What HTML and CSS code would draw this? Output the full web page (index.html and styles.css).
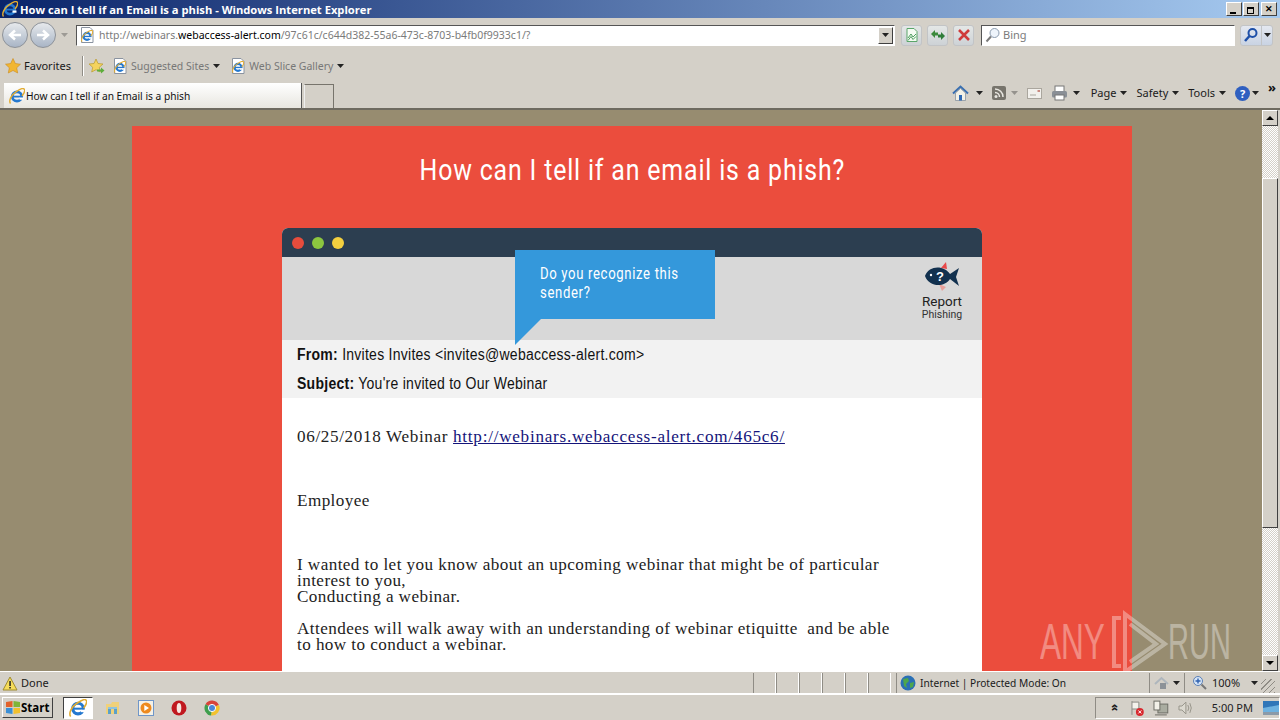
FILE: index.html
```html
<!DOCTYPE html>
<html lang="en">
<head>
    <meta charset="UTF-8">
    <title>How can I tell if an Email is a phish</title>
    <link rel="stylesheet" href="styles.css">
</head>
<body>
    <svg class="defs" width="0" height="0">
        <symbol id="ie" viewBox="0 0 16 16">
            <circle cx="8" cy="8.500" r="4.700" fill="none" stroke="#2478cf" stroke-width="2.800"/>
            <rect x="4" y="7.700" width="9" height="1.800" fill="#2478cf"/>
            <rect x="10.500" y="9.500" width="4" height="2.200" fill="#fff"/>
            <path d="M1.500 15.500C-.5 13 2 7 7 3.800S14.500-.5 15.500 1.500 14.500 6 13 8" fill="none" stroke="#e2ac32" stroke-width="1.400"/>
        </symbol>
        <symbol id="page" viewBox="0 0 16 16">
            <path d="M2.500 .5H11L14 3.500V15.500H2.500Z" fill="#fff" stroke="#8a93a0"/>
            <use href="#ie" x="2" y="3" width="12" height="12"/>
        </symbol>
        <symbol id="arrow" viewBox="0 0 7 4">
            <path d="M0 0H7L3.500 4Z" fill="#222"/>
        </symbol>
    </svg>

    <div class="titlebar">
        <svg class="icon16"><use href="#ie"/></svg>
        <span class="title-text">How can I tell if an Email is a phish - Windows Internet Explorer</span>
        <div class="win-btns">
            <button class="win-btn"><i class="min-mark"></i></button>
            <button class="win-btn"><i class="max-mark"></i></button>
            <button class="win-btn close-btn">✕</button>
        </div>
    </div>

    <div class="nav-row">
        <div class="round-btn"><svg width="16" height="16" viewBox="0 0 16 16"><path d="M14 8H4M8 3.500 3 8l5 4.500" fill="none" stroke="#fff" stroke-width="2.500"/></svg></div>
        <div class="round-btn"><svg width="16" height="16" viewBox="0 0 16 16"><path d="M2 8H12M8 3.500 13 8l-5 4.500" fill="none" stroke="#fff" stroke-width="2.500"/></svg></div>
        <svg class="nav-drop"><use href="#arrow"/></svg>
        <div class="address">
            <svg class="icon16"><use href="#page"/></svg>
            <span class="url">http://webinars.<b>webaccess-alert.com</b>/97c61c/c644d382-55a6-473c-8703-b4fb0f9933c1/?</span>
            <div class="combo-btn"><svg width="7" height="4"><use href="#arrow"/></svg></div>
        </div>
        <div class="tool-btn">
            <svg width="16" height="16" viewBox="0 0 16 16"><path d="M3 1.500H10L13 4.500V14.500H3Z" fill="#f4fbf2" stroke="#5aa66a"/><path d="M4 11 7 7l2 3 3-3M4 13.500 7 9.500l2 3 3-3" fill="none" stroke="#4d9e5e"/></svg>
        </div>
        <div class="tool-btn">
            <svg width="16" height="16" viewBox="0 0 16 16"><path d="M1 7 5 3V5.500H8V8.500H5V11Z" fill="#3c8a3c"/><path d="M15 9 11 13V10.500H8V7.500H11V5Z" fill="#2f7d3a"/></svg>
        </div>
        <div class="tool-btn">
            <svg width="16" height="16" viewBox="0 0 16 16"><path d="M3 3 13 13M13 3 3 13" stroke="#cf3a3a" stroke-width="2.600"/></svg>
        </div>
        <div class="search">
            <svg width="16" height="16" viewBox="0 0 16 16"><circle cx="9.500" cy="6" r="4.500" fill="#eef4fb" stroke="#8a9aae"/><path d="M6 9.500 1.500 14.500" stroke="#7a7a7a" stroke-width="2"/></svg>
            <span>Bing</span>
        </div>
        <div class="search-go">
            <div class="go-main"><svg width="16" height="16" viewBox="0 0 16 16"><circle cx="9.500" cy="6" r="4" fill="none" stroke="#1d4fa8" stroke-width="2"/><path d="M6.500 9 2 14" stroke="#1d4fa8" stroke-width="2.500"/></svg></div>
            <div class="go-drop"><svg width="7" height="4"><use href="#arrow"/></svg></div>
        </div>
    </div>

    <div class="fav-row">
        <div class="fav-main">
            <svg width="16" height="16" viewBox="0 0 16 16"><path d="M8 .5 10.300 5.500 15.500 6.200 11.700 9.800 12.700 15 8 12.500 3.300 15 4.300 9.800 .5 6.200 5.700 5.500Z" fill="#f2b632" stroke="#c98a1e" stroke-width=".6"/></svg>
            <span>Favorites</span>
        </div>
        <div class="fav-sep"></div>
        <svg class="add-fav" width="17" height="17" viewBox="0 0 17 17"><path d="M8 1 10 5.500 15 6 11.300 9.300 12.300 14 8 11.700 3.700 14 4.700 9.300 1 6 6 5.500Z" fill="#f4d35e" stroke="#b79a2e" stroke-width=".7"/><path d="M9 11.500H13V9.500L16.500 12.500 13 15.500V13.500H9Z" fill="#5cae3c"/></svg>
        <div class="fav-link">
            <svg class="icon16"><use href="#page"/></svg>
            <span>Suggested Sites</span>
            <svg width="7" height="4"><use href="#arrow"/></svg>
        </div>
        <div class="fav-link">
            <svg class="icon16"><use href="#page"/></svg>
            <span>Web Slice Gallery</span>
            <svg width="7" height="4"><use href="#arrow"/></svg>
        </div>
    </div>

    <div class="tab-row">
        <div class="tab">
            <svg class="icon16"><use href="#ie"/></svg>
            <span>How can I tell if an Email is a phish</span>
        </div>
        <div class="new-tab"></div>
        <div class="commands">
            <svg class="cmd-home" width="17" height="17" viewBox="0 0 17 17"><path d="M1 8.500 8.500 1.500 16 8.500" fill="none" stroke="#3a6fb0" stroke-width="2"/><path d="M3.500 8V15.500H13.500V8L8.500 3.500Z" fill="#f3f1e6" stroke="#7d8a9a" stroke-width=".7"/><rect x="7" y="10" width="3" height="5.500" fill="#2f69b5"/></svg>
            <svg class="cmd-drop" width="7" height="4"><use href="#arrow"/></svg>
            <svg class="cmd-rss" width="14" height="14" viewBox="0 0 14 14"><rect width="14" height="14" rx="2" fill="#77746c"/><circle cx="4" cy="10.500" r="1.500" fill="#e8e6e0"/><path d="M3 6.500A4.500 4.500 0 0 1 7.500 11M3 3A8 8 0 0 1 11 11" fill="none" stroke="#e8e6e0" stroke-width="1.500"/></svg>
            <svg class="cmd-drop faint" width="7" height="4"><use href="#arrow"/></svg>
            <svg class="cmd-mail" width="15" height="11" viewBox="0 0 15 11"><rect x=".5" y=".5" width="14" height="10" fill="#f2f0ec" stroke="#aaa69e"/><rect x="10.500" y="2" width="2.500" height="2" fill="#c98a80"/><path d="M3 7H9" stroke="#aaa69e"/></svg>
            <svg class="cmd-print" width="17" height="16" viewBox="0 0 17 16"><rect x="4" y="1" width="9" height="6" fill="#fff" stroke="#777"/><rect x="1" y="6" width="15" height="6.500" rx="1.500" fill="#8a8f96"/><rect x="4" y="10" width="9" height="5" fill="#fff" stroke="#777"/></svg>
            <svg class="cmd-drop print-drop" width="7" height="4"><use href="#arrow"/></svg>
            <span class="cmd-text">Page</span><svg class="cmd-drop" width="7" height="4"><use href="#arrow"/></svg>
            <span class="cmd-text">Safety</span><svg class="cmd-drop" width="7" height="4"><use href="#arrow"/></svg>
            <span class="cmd-text">Tools</span><svg class="cmd-drop" width="7" height="4"><use href="#arrow"/></svg>
            <span class="help">?</span><svg class="cmd-drop" width="7" height="4"><use href="#arrow"/></svg>
            <span class="chevrons">»</span>
        </div>
    </div>

    <div class="viewport">
        <div class="page-area">
            <div class="page">
                <h1><span>How can I tell if an email is a phish?</span></h1>
                <div class="mail-window">
                    <div class="mail-top">
                        <i class="dot red"></i><i class="dot green"></i><i class="dot yellow"></i>
                    </div>
                    <div class="mail-tools">
                        <div class="callout"><span>Do you recognize this<br>sender?</span></div>
                        <div class="report">
                            <svg width="36" height="30" viewBox="0 0 36 30">
                                <path d="M17 6 22 0 23 7Z" fill="#e8494a"/>
                                <path d="M15 22 22 25 18 29Z" fill="#e8a09a"/>
                                <path d="M1 14C5 3 20 3 26 12L35 6 32 15 35 24 26 17C20 26 5 25 1 14Z" fill="#12314f"/>
                                <circle cx="7" cy="13" r="1.200" fill="#fff"/>
                                <text x="12" y="19" class="fish-mark">?</text>
                            </svg>
                            <span class="report-big">Report</span>
                            <span class="report-small">Phishing</span>
                        </div>
                    </div>
                    <div class="mail-head">
                        <div class="head-line"><b>From:</b> Invites Invites &lt;invites@webaccess-alert.com&gt;</div>
                        <div class="head-line"><b>Subject:</b> You're invited to Our Webinar</div>
                    </div>
                    <div class="mail-body">
                        <p class="date-line">06/25/2018 Webinar <a href="#">http://webinars.webaccess-alert.com/465c6/</a></p>
                        <p>Employee</p>
                        <p>I wanted to let you know about an upcoming webinar that might be of particular<br>interest to you,<br>Conducting a webinar.<br><br>Attendees will walk away with an understanding of webinar etiquitte&nbsp; and be able<br>to how to conduct a webinar.</p>
                    </div>
                </div>
            </div>
            <div class="watermark">
                <span>ANY</span>
                <svg width="60" height="64" viewBox="0 0 60 64"><path d="M11 8H4V56H11M15 4 55 34 15 62ZM20 14 46 34 20 52" fill="none" stroke="#fff" stroke-width="4"/></svg>
                <span>RUN</span>
            </div>
        </div>
        <div class="scrollbar">
            <div class="sb-btn"><i class="up"></i></div>
            <div class="sb-gap-top"></div>
            <div class="sb-thumb"></div>
            <div class="sb-gap"></div>
            <div class="sb-btn"><i class="down"></i></div>
        </div>
    </div>

    <div class="statusbar">
        <svg class="warn" width="16" height="15" viewBox="0 0 16 15"><path d="M8 1 15 14H1Z" fill="#f6dc5a" stroke="#a08c30"/><rect x="7.300" y="5" width="1.500" height="5" fill="#222"/><rect x="7.300" y="11" width="1.500" height="1.500" fill="#222"/></svg>
        <span class="status-done">Done</span>
        <div class="status-cells"><i></i><i></i><i></i><i></i><i></i><i></i></div>
        <div class="status-zone">
            <svg width="16" height="16" viewBox="0 0 16 16"><circle cx="8" cy="8" r="7.500" fill="#2a6fb5"/><path d="M3 4 8 3 9 6 6 9 7 13 4 11ZM10 8 14 7 13 12 10 13Z" fill="#4da64d"/></svg>
            <span>Internet | Protected Mode: On</span>
        </div>
        <div class="status-lock">
            <svg width="15" height="15" viewBox="0 0 15 15"><path d="M1 8 7.500 2 14 8" fill="none" stroke="#aeb6bd" stroke-width="2"/><rect x="6" y="7" width="6" height="6" fill="#8c9298"/></svg>
            <svg width="7" height="4"><use href="#arrow"/></svg>
        </div>
        <div class="status-zoom">
            <svg width="15" height="15" viewBox="0 0 15 15"><circle cx="6" cy="6" r="4.500" fill="#d5e4f6" stroke="#5c80b5"/><path d="M3.500 6H8.500M6 3.500V8.500" stroke="#2f62b0" stroke-width="1.400"/><path d="M9.500 9.500 14 14" stroke="#777" stroke-width="2"/></svg>
            <span>100%</span>
            <svg class="zoom-drop" width="7" height="4"><use href="#arrow"/></svg>
        </div>
        <div class="grip"></div>
    </div>

    <div class="taskbar">
        <button class="start">
            <svg width="16" height="15" viewBox="0 0 16 15"><path d="M1 2 7.500 1V7H1Z" fill="#e2622b"/><path d="M8.500 1 15 2V7H8.500Z" fill="#7fb539"/><path d="M1 8H7.500V14L1 13Z" fill="#3a8fd6"/><path d="M8.500 8H15V13L8.500 14Z" fill="#f2c02e"/></svg>
            <span>Start</span>
        </button>
        <div class="quick-active"><svg width="18" height="18"><use href="#ie"/></svg></div>
        <svg class="quick" width="16" height="16" viewBox="0 0 16 16"><path d="M1 4H6L7 2H14V14H1Z" fill="#f0d17a"/><rect x="3" y="8" width="3" height="6" fill="#5ba0c9"/><rect x="9" y="8" width="3" height="6" fill="#5ba0c9"/><rect x="3" y="7" width="9" height="2" fill="#8fc3de"/></svg>
        <svg class="quick" width="16" height="16" viewBox="0 0 16 16"><rect x=".5" y=".5" width="15" height="15" fill="#f5f1e6" stroke="#6f96c9"/><circle cx="8" cy="8" r="5.500" fill="#ee8a1f"/><path d="M6.300 5 11 8 6.300 11Z" fill="#fff"/></svg>
        <svg class="quick" width="16" height="16" viewBox="0 0 16 16"><circle cx="8" cy="8" r="7.500" fill="#c0181f"/><ellipse cx="8" cy="8" rx="2.300" ry="5" fill="#f6e6e0"/></svg>
        <svg class="quick" width="16" height="16" viewBox="0 0 16 16"><path d="M8 8 1.500 4.200A7.500 7.500 0 0 1 14.900 5Z" fill="#d8433a"/><path d="M8 8 14.900 5A7.500 7.500 0 0 1 7 15.500Z" fill="#f2c22e"/><path d="M8 8 7 15.500A7.500 7.500 0 0 1 1.500 4.200Z" fill="#3f9e4d"/><circle cx="8" cy="8" r="3.600" fill="#4a86d8" stroke="#fff"/></svg>
        <div class="tray">
            <span class="tray-more">»</span>
            <svg width="14" height="16" viewBox="0 0 14 16"><path d="M2 1V15M2 2H9V9H2" fill="#f4f2ec" stroke="#8a8a84"/><circle cx="10" cy="12" r="4" fill="#d8282e"/><path d="M8.500 10.500 11.500 13.500M11.500 10.500 8.500 13.500" stroke="#fff"/></svg>
            <svg width="16" height="16" viewBox="0 0 16 16"><rect x="5" y="4" width="10" height="9" fill="#a9aca0" stroke="#6e6e66"/><rect x="1" y="1" width="6" height="9" fill="#f2f0e8" stroke="#6e6e66"/><path d="M2 15H14" stroke="#6e6e66"/></svg>
            <svg width="16" height="16" viewBox="0 0 16 16"><path d="M1 6H4L8 2V14L4 10H1Z" fill="#dcd9d0" stroke="#97948a"/><path d="M10 5Q12 8 10 11M12 3Q15 8 12 13" fill="none" stroke="#97948a"/></svg>
            <span class="clock">5:00 PM</span>
            <svg class="show-desk" width="16" height="14" viewBox="0 0 16 14"><rect width="16" height="11" fill="#2f76b8"/><path d="M0 7 16 4V11H0Z" fill="#6eb2e0"/><rect y="11" width="16" height="3" fill="#8b9aa8"/></svg>
        </div>
    </div>
</body>
</html>
```

FILE: styles.css
```css
html, body {
    margin: 0;
    padding: 0;
    width: 1280px;
    height: 720px;
    overflow: hidden;
}
body {
    display: flex;
    flex-direction: column;
    background-color: #d4d0c8;
    font-family: "Noto Sans", sans-serif;
    font-size: 11px;
    color: #1a1a1a;
}
.defs {
    position: absolute;
}
.icon16 {
    width: 16px;
    height: 16px;
    flex: none;
}

/* title bar */
.titlebar {
    height: 18px;
    display: flex;
    align-items: center;
    padding: 0 3px 0 2px;
    gap: 2px;
    background: linear-gradient(to right, #0a246a, #a6caf0);
    color: #fff;
}
.title-text {
    font-family: "Open Sans", sans-serif;
    font-weight: 700;
    font-size: 11.200px;
}
.win-btns {
    margin-left: auto;
    display: flex;
    gap: 1px;
}
.win-btn {
    width: 16px;
    height: 14px;
    padding: 0;
    background: #d4d0c8;
    border: 1px solid;
    border-color: #fff #404040 #404040 #fff;
    font-size: 9px;
    line-height: 10px;
    color: #000;
    display: flex;
    align-items: center;
    justify-content: center;
}
.min-mark {
    width: 6px;
    height: 2px;
    background: #000;
    margin-top: 7px;
    margin-right: 2px;
}
.max-mark {
    position: relative;
    width: 5px;
    height: 4px;
    margin-top: 3px;
    margin-right: 2px;
    border: 1px solid #000;
    border-top-width: 2px;
    background: #d4d0c8;
}
.max-mark::before {
    content: "";
    position: absolute;
    z-index: -1;
    left: 2px;
    top: -5px;
    width: 5px;
    height: 4px;
    border: 1px solid #000;
    border-top-width: 2px;
}
.close-btn {
    margin-left: 1px;
    font-weight: 700;
}

/* nav row */
.nav-row {
    height: 34px;
    display: flex;
    align-items: center;
    padding-left: 2px;
    box-sizing: border-box;
}
.round-btn {
    width: 26px;
    height: 26px;
    margin-right: 2px;
    border-radius: 50%;
    border: 1px solid #8d9299;
    box-sizing: border-box;
    background: linear-gradient(#e6e9ec, #a9b5c6);
    display: flex;
    align-items: center;
    justify-content: center;
}
.nav-drop {
    width: 7px;
    height: 4px;
    margin: 0 8px 0 3px;
    opacity: .3;
}
.address {
    width: 819px;
    height: 21px;
    box-sizing: border-box;
    background: #fff;
    border: 1px solid #fff;
    border-color: #555 #fff #fff #555;
    display: flex;
    align-items: center;
    padding-left: 2px;
    margin-right: 6px;
}
.url {
    margin-left: 4px;
    color: #7b7b7b;
    white-space: nowrap;
    font-size: 10.500px;
    flex: 1;
    padding-bottom: 1px;
}
.url b {
    font-weight: 400;
    color: #000;
}
.combo-btn {
    width: 15px;
    height: 17px;
    margin-right: 1px;
    background: #d4d0c8;
    border: 1px solid;
    border-color: #fff #404040 #404040 #fff;
    box-sizing: border-box;
    display: flex;
    align-items: center;
    justify-content: center;
}
.tool-btn {
    width: 21px;
    height: 21px;
    margin-right: 5px;
    box-sizing: border-box;
    border: 1px solid #c2c4c6;
    border-radius: 3px;
    background: linear-gradient(#e4e7e6, #cdd2d6);
    display: flex;
    align-items: center;
    justify-content: center;
}
.search {
    width: 254px;
    height: 21px;
    box-sizing: border-box;
    margin-left: 2px;
    background: #fff;
    border: 1px solid;
    border-color: #555 #fff #fff #555;
    display: flex;
    align-items: center;
    gap: 2px;
    padding-left: 3px;
    padding-bottom: 1px;
    color: #7b7b7b;
}
.search-go {
    display: flex;
    height: 21px;
    width: 33px;
    margin-left: 5px;
    border: 1px solid #c2c4c6;
    border-radius: 3px;
    box-sizing: border-box;
    background: linear-gradient(#e4e8f0, #c9d3e3);
}
.go-main {
    width: 20px;
    display: flex;
    align-items: center;
    justify-content: center;
    border-right: 1px solid #c2c4c6;
}
.go-drop {
    flex: 1;
    display: flex;
    align-items: center;
    justify-content: center;
}

/* favorites row */
.fav-row {
    height: 28px;
    display: flex;
    align-items: center;
    padding-left: 5px;
}
.fav-main {
    display: flex;
    align-items: center;
    gap: 3px;
    width: 77px;
    color: #1a1a1a;
}
.fav-main span {
    padding-bottom: 2px;
}
.fav-sep {
    width: 1px;
    height: 20px;
    background: #8f8c85;
    border-right: 1px solid #fff;
}
.add-fav {
    margin-left: 4px;
    margin-right: 7px;
}
.fav-link {
    display: flex;
    align-items: center;
    gap: 3px;
    margin-right: 10px;
    color: #777;
    font-size: 10.500px;
}
.fav-link span {
    margin-right: 1px;
    padding-bottom: 1px;
}

/* tab row */
.tab-row {
    height: 30px;
    display: flex;
    align-items: flex-end;
    padding-left: 4px;
    box-sizing: border-box;
    border-bottom: 2px solid #6e6a60;
}
.tab {
    width: 298px;
    height: 25px;
    box-sizing: border-box;
    display: flex;
    align-items: center;
    gap: 1px;
    padding-left: 5px;
    background: linear-gradient(#fff, #e8e6e0);
    border-right: 1px solid #555;
    color: #111;
    font-size: 10.200px;
}
.new-tab {
    width: 28px;
    height: 23px;
    margin-left: 2px;
    border: 1px solid #77746c;
    border-bottom: 0;
    border-left-color: #eee;
}
.commands {
    margin-left: auto;
    height: 24px;
    margin-bottom: 3px;
    display: flex;
    align-items: center;
    padding-right: 4px;
}
.cmd-home {
    margin-right: 2px;
}
.cmd-drop {
    margin-left: 5px;
    margin-right: 9px;
}
.cmd-drop.faint {
    opacity: .35;
}
.cmd-drop.print-drop {
    margin-right: 11px;
}
.cmd-mail {
    margin-right: 9px;
}
.cmd-text {
    color: #1a1a1a;
    margin-right: -1px;
    padding-bottom: 1px;
}
.help {
    width: 15px;
    height: 15px;
    border-radius: 50%;
    background: #2f5fc0;
    color: #fff;
    font-weight: 700;
    text-align: center;
    line-height: 15px;
    margin-right: -3px;
}
.chevrons {
    font-size: 13px;
    font-weight: 700;
    line-height: 13px;
    margin-top: -11px;
    color: #111;
}

/* page viewport */
.viewport {
    height: 562px;
    display: flex;
    border-bottom: 1px solid #fff;
    box-sizing: border-box;
}
.page-area {
    flex: 1;
    position: relative;
    overflow: hidden;
    background: #978c70;
    padding-top: 16px;
    box-sizing: border-box;
}
.page {
    width: 1000px;
    margin-left: 132px;
    background: #eb4d3d;
    padding-top: 27px;
    height: 700px;
}
h1 {
    margin: 0 0 41px;
    text-align: center;
    color: #fff;
    font-family: "Roboto", sans-serif;
    font-weight: 400;
    font-size: 30px;
    line-height: 34px;
    letter-spacing: 1px;
}
h1 span {
    display: inline-block;
    transform: scaleX(.83);
}
.mail-window {
    position: relative;
    width: 700px;
    margin: 0 auto;
    background: #fff;
    border-radius: 6px 6px 0 0;
}
.mail-top {
    height: 29px;
    background: #2c3e50;
    border-radius: 6px 6px 0 0;
    display: flex;
    align-items: center;
    gap: 8px;
    padding-left: 10px;
}
.dot {
    width: 12px;
    height: 12px;
    border-radius: 50%;
}
.dot.red { background: #e74c3c; }
.dot.green { background: #8cc63f; }
.dot.yellow { background: #f4d03f; }
.mail-tools {
    height: 83px;
    background: #d8d8d8;
    display: flex;
    justify-content: flex-end;
}
.callout {
    position: absolute;
    left: 233px;
    top: 22px;
    width: 200px;
    height: 69px;
    box-sizing: border-box;
    padding: 14px 0 0 25px;
    background: #3498db;
    color: #fff;
    font-family: "Roboto", sans-serif;
    font-size: 16px;
    line-height: 19px;
    letter-spacing: .8px;
    white-space: nowrap;
}
.callout span {
    display: inline-block;
    transform: scaleX(.82);
    transform-origin: left;
}
.callout::after {
    content: "";
    position: absolute;
    left: 0;
    top: 69px;
    border-top: 26px solid #3498db;
    border-right: 26px solid transparent;
}
.report {
    width: 80px;
    display: flex;
    flex-direction: column;
    align-items: center;
    padding-top: 5px;
    margin-right: 0;
}
.fish-mark {
    font-family: "Liberation Sans", sans-serif;
    font-size: 13px;
    font-weight: 700;
    fill: #fff;
}
.report-big {
    font-family: "Roboto", sans-serif;
    font-size: 13.500px;
    line-height: 15px;
    color: #222;
    margin-top: 2px;
}
.report-small {
    font-family: "Roboto", sans-serif;
    font-size: 10.500px;
    line-height: 12px;
    color: #333;
}
.mail-head {
    height: 58px;
    background: #f2f2f2;
    padding-left: 15px;
    font-family: "Liberation Sans", sans-serif;
    font-size: 16px;
    color: #111;
    letter-spacing: .3px;
}
.head-line {
    height: 29px;
    line-height: 29px;
    white-space: nowrap;
    transform: scaleX(.875);
    transform-origin: left;
}
.mail-body {
    padding: 31px 0 40px 15px;
    font-family: "Liberation Serif", serif;
    font-size: 16px;
    line-height: 16px;
    letter-spacing: .4px;
    color: #222;
    white-space: nowrap;
}
.mail-body p {
    margin: 0 0 48px;
    transform: scaleX(1.07);
    transform-origin: left;
}
.mail-body .date-line {
    letter-spacing: .6px;
}
.mail-body a {
    color: #14147a;
    letter-spacing: .7px;
}

/* watermark */
.watermark {
    position: absolute;
    left: 1040px;
    top: 500px;
    display: flex;
    align-items: center;
    gap: 7px;
    color: #fff;
    opacity: .35;
    font-family: "Liberation Sans", sans-serif;
    font-size: 50px;
    line-height: 64px;
}
.watermark span {
    width: 63px;
    transform: scaleX(.63);
    transform-origin: left;
}
.watermark span:last-child {
    margin-left: -9px;
    transform: scaleX(.58);
}

/* scrollbar */
.scrollbar {
    width: 16px;
    margin-right: 2px;
    display: flex;
    flex-direction: column;
    background: repeating-conic-gradient(#d4d0c8 0 25%, #fff 0 50%) 0 0 / 2px 2px;
}
.sb-btn {
    width: 16px;
    height: 16px;
    flex: none;
    box-sizing: border-box;
    background: #d4d0c8;
    border: 1px solid;
    border-color: #fff #404040 #404040 #fff;
    display: flex;
    align-items: center;
    justify-content: center;
}
.sb-btn i {
    width: 0;
    height: 0;
    border-left: 4px solid transparent;
    border-right: 4px solid transparent;
}
.sb-btn .up { border-bottom: 4px solid #000; }
.sb-btn .down { border-top: 4px solid #000; }
.sb-gap-top {
    height: 52px;
}
.sb-thumb {
    height: 350px;
    box-sizing: border-box;
    background: #d4d0c8;
    border: 1px solid;
    border-color: #fff #404040 #404040 #fff;
}
.sb-gap {
    flex: 1;
}

/* status bar */
.statusbar {
    height: 22px;
    margin-top: 1px;
    display: flex;
    align-items: center;
    border-bottom: 2px solid #fff;
    box-sizing: border-box;
    padding-left: 2px;
}
.status-done {
    margin-left: 3px;
    width: 732px;
    padding-bottom: 1px;
}
.status-cells {
    display: flex;
    height: 100%;
}
.status-cells i {
    border-left: 1px solid #8f8c85;
    border-right: 1px solid #fff;
    width: 21px;
}
.status-zone {
    width: 253px;
    height: 100%;
    display: flex;
    align-items: center;
    gap: 4px;
    padding-left: 3px;
    padding-bottom: 1px;
    border-left: 1px solid #8f8c85;
    box-sizing: border-box;
    margin-left: 5px;
    font-size: 10.200px;
}
.status-lock {
    width: 35px;
    height: 100%;
    display: flex;
    align-items: center;
    justify-content: center;
    gap: 4px;
    border-left: 1px solid #8f8c85;
    box-sizing: border-box;
}
.status-zoom {
    width: 77px;
    height: 100%;
    display: flex;
    align-items: center;
    gap: 5px;
    padding-left: 7px;
    padding-bottom: 1px;
    border-left: 1px solid #8f8c85;
    box-sizing: border-box;
}
.zoom-drop {
    margin-left: 6px;
}
.grip {
    width: 14px;
    height: 14px;
    margin-top: 6px;
    background: repeating-linear-gradient(135deg, transparent 0 3px, #8f8c85 3px 4px);
}

/* taskbar */
.taskbar {
    flex: 1;
    display: flex;
    align-items: center;
    padding-left: 2px;
}
.start {
    width: 51px;
    height: 21px;
    padding: 0 0 0 2px;
    background: #d4d0c8;
    border: 1px solid;
    border-color: #fff #404040 #404040 #fff;
    display: flex;
    align-items: center;
    gap: 0;
    font-family: "Open Sans", sans-serif;
    font-weight: 700;
    font-size: 11.500px;
    color: #000;
}
.quick-active {
    width: 30px;
    height: 22px;
    margin-left: 10px;
    margin-right: 12px;
    box-sizing: border-box;
    background: #fff;
    border: 1px solid;
    border-color: #404040 #fff #fff #404040;
    display: flex;
    align-items: center;
    justify-content: center;
}
.quick {
    margin-right: 17px;
    flex: none;
}
.tray {
    margin-left: auto;
    width: 185px;
    height: 22px;
    box-sizing: border-box;
    border: 1px solid;
    border-color: #8f8c85 #fff #fff #8f8c85;
    display: flex;
    align-items: center;
    gap: 9px;
    padding-left: 14px;
}
.tray-more {
    transform: rotate(-90deg);
    font-size: 12px;
    font-weight: 700;
    margin-right: 4px;
}
.clock {
    margin-left: 9px;
    color: #222;
    padding-bottom: 1px;
    white-space: nowrap;
}
.show-desk {
    margin-left: 1px;
    flex: none;
}
```
